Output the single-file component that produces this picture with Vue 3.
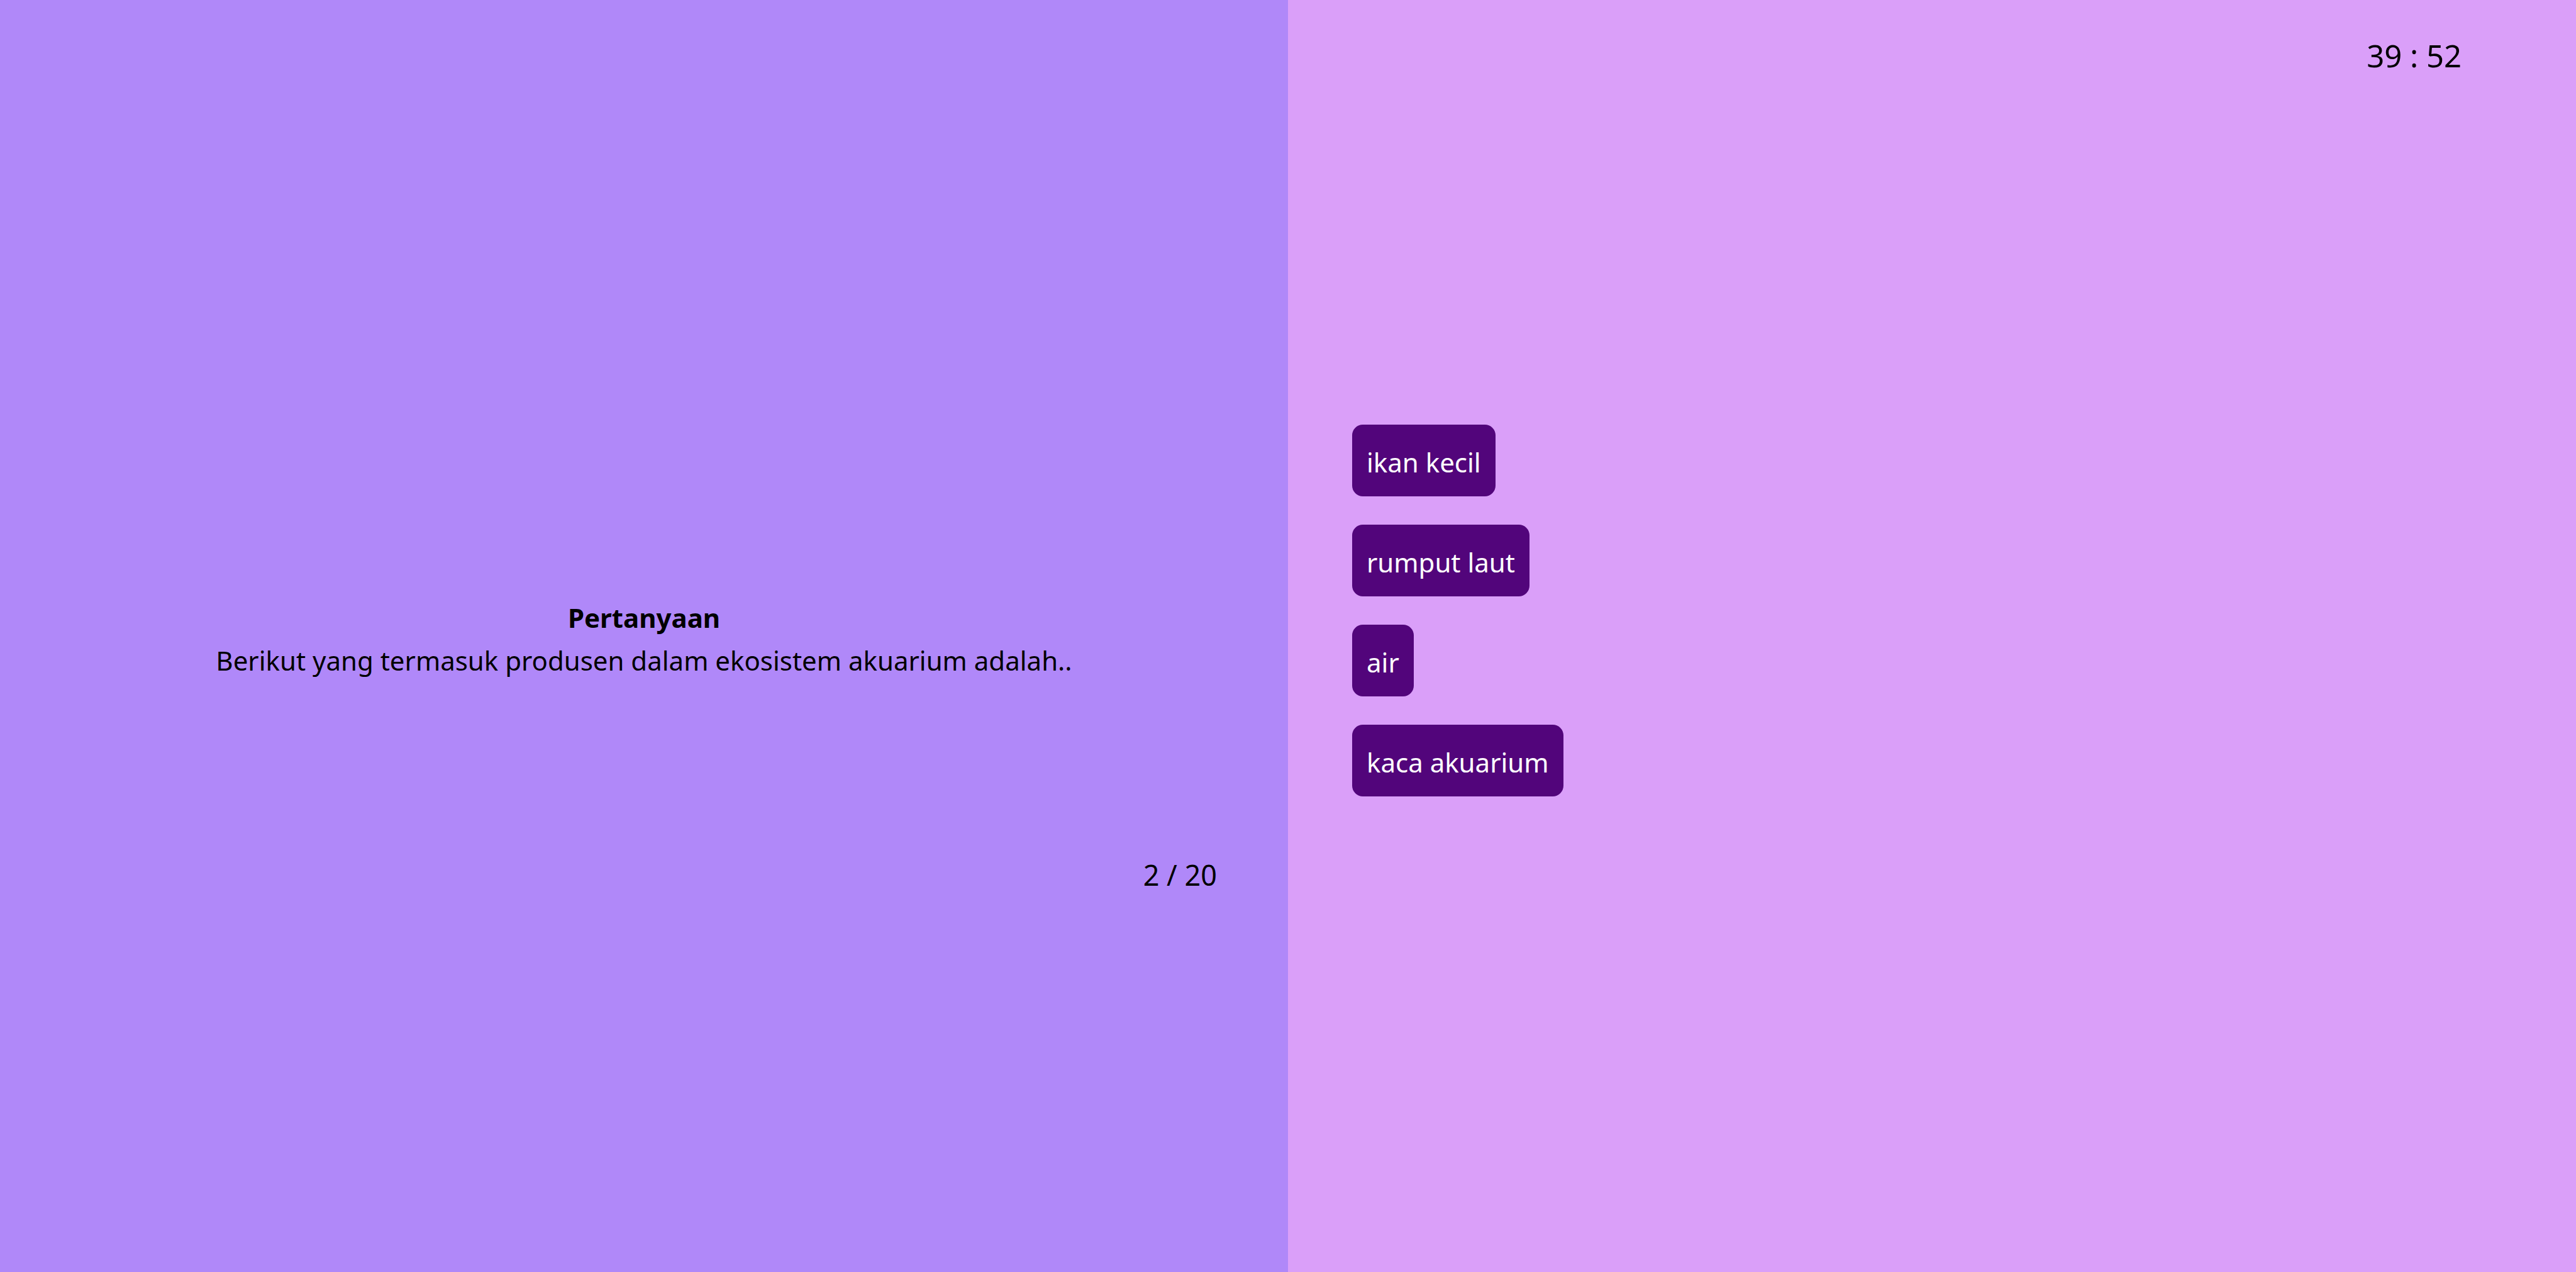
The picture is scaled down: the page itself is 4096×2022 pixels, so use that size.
<script setup>
const options = ['ikan kecil', 'rumput laut', 'air', 'kaca akuarium']
</script>

<template>
  <main class="quiz">
    <section class="question">
      <div class="prompt">
        <h1>Pertanyaan</h1>
        <p>Berikut yang termasuk produsen dalam ekosistem akuarium adalah..</p>
      </div>
      <p class="progress">2 / 20</p>
    </section>
    <section class="answers">
      <p class="timer">39 : 52</p>
      <div class="options">
        <button v-for="option in options" :key="option" type="button">{{ option }}</button>
      </div>
    </section>
  </main>
</template>

<style>
body {
  margin: 0;
}
</style>

<style scoped>
.quiz {
  display: grid;
  grid-template-columns: 1fr 1fr;
  min-height: 100vh;
  font-family: "Noto Sans", "Open Sans", sans-serif;
  font-size: 42px;
  line-height: 68px;
  color: #000;
}
h1,
p {
  margin: 0;
  font-size: inherit;
}
.question {
  display: flex;
  flex-direction: column;
  padding-top: 948px;
  background: #b088f9;
}
.prompt {
  text-align: center;
}
.progress {
  margin-top: 273px;
  padding-right: 113px;
  font-size: 45px;
  text-align: right;
}
.answers {
  background: #da9ff9;
}
.timer {
  padding: 50px 182px 0 0;
  font-size: 49px;
  line-height: 76px;
  text-align: right;
}
.options {
  display: flex;
  flex-direction: column;
  align-items: flex-start;
  gap: 45px;
  margin-top: 549px;
  padding-left: 102px;
}
.options button {
  padding: 26px 23px 20px;
  border: 0;
  border-radius: 17px;
  background: #52057b;
  color: #fff;
  font: inherit;
  cursor: pointer;
}
</style>
